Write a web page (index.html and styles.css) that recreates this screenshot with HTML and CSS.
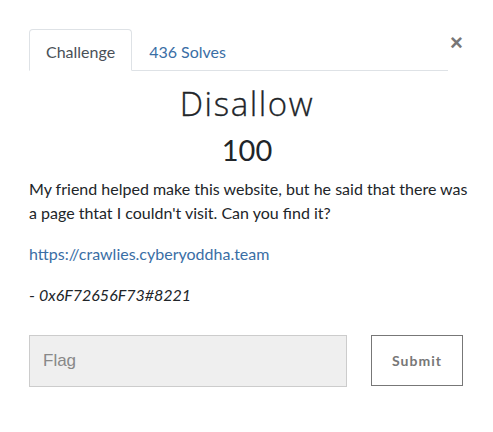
FILE: index.html
```html
<!DOCTYPE html>
<html>
<head>
<meta charset="utf-8">
<link rel="stylesheet" href="styles.css">
</head>
<body>
<div class="modal">
  <div class="tabs-row">
    <ul class="tabs">
      <li class="tab active">Challenge</li>
      <li class="tab"><a href="#">436 Solves</a></li>
    </ul>
    <span class="close">&times;</span>
  </div>
  <h2 class="title">Disallow</h2>
  <h3 class="value">100</h3>
  <div class="desc">
    <p>My friend helped make this website, but he said that there was a page thtat I couldn't visit. Can you find it?</p>
    <p><a href="#">https://crawlies.cyberyoddha.team</a></p>
    <p>- <em>0x6F72656F73#8221</em></p>
  </div>
  <form class="submit-row">
    <input class="flag" type="text" placeholder="Flag">
    <button class="submit" type="button">Submit</button>
  </form>
</div>
</body>
</html>
```

FILE: styles.css
```css
html, body {
  margin: 0;
  padding: 0;
  background: #fff;
}
body {
  font-family: Lato, "Open Sans", sans-serif;
  color: #212529;
}
.modal {
  padding: 29px 24px 0 29px;
}
.tabs-row {
  display: flex;
  align-items: flex-start;
  margin-right: 6px;
}
.tabs {
  list-style: none;
  margin: 0;
  padding: 0;
  display: flex;
  flex: 1;
  border-bottom: 1px solid #dee2e6;
  height: 41px;
}
.tab {
  padding: 0 16px;
  height: 41px;
  line-height: 43px;
  font-size: 16px;
  border: 1px solid transparent;
  border-top-left-radius: 4px;
  border-top-right-radius: 4px;
  box-sizing: border-box;
}
.tab.active {
  border-color: #dee2e6 #dee2e6 #fff;
  height: 42px;
  background: #fff;
  color: #495057;
}
.tab a {
  color: #3a6ea5;
  text-decoration: none;
}
.close {
  font-family: "Liberation Sans", Arial, sans-serif;
  font-weight: bold;
  font-size: 22px;
  color: #777;
  margin-left: 2px;
  margin-top: 2px;
  line-height: 24px;
  width: 13px;
}
.title {
  font-family: "Open Sans", Lato, sans-serif;
  font-weight: 300;
  -webkit-text-stroke: 0.3px #212529;
  letter-spacing: 1.6px;
  font-size: 33px;
  text-align: center;
  margin: 11px 0 0;
  line-height: 44px;
  color: #212529;
  padding-right: 4px;
}
.value {
  font-family: Lato, sans-serif;
  font-weight: 400;
  font-size: 29px;
  text-align: center;
  margin: 7px 0 0;
  line-height: 34px;
  padding-right: 4px;
}
.desc {
  font-size: 16px;
  line-height: 24px;
  margin-top: 10px;
}
.desc p {
  margin: 0 0 17px;
}
.desc a {
  color: #3a6ea5;
  text-decoration: none;
}
.submit-row {
  display: flex;
  align-items: flex-start;
  margin-top: 28px;
}
.flag {
  width: 318px;
  height: 52px;
  box-sizing: border-box;
  background: #efefef;
  border: 1px solid #ccc;
  padding: 0 13px;
  font-family: "Liberation Sans", Arial, sans-serif;
  font-size: 17px;
  color: #555;
  outline: none;
}
.flag::placeholder {
  color: #888;
}
.submit {
  margin-left: 24px;
  width: 92px;
  height: 51px;
  box-sizing: border-box;
  background: #fff;
  border: 1px solid #777;
  font-family: Lato, sans-serif;
  font-weight: bold;
  font-size: 14px;
  letter-spacing: 1px;
  color: #777;
  padding: 0;
}
```
